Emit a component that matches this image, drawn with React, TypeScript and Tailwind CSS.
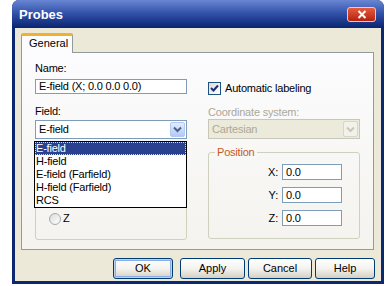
import React from "react";

const font = { fontFamily: '"Liberation Sans", Arial, sans-serif' };

const Arrow: React.FC<{ disabled?: boolean }> = ({ disabled }) => (
  <div
    className={
      disabled
        ? "w-[15px] h-full border border-[#d8d6cb] rounded-[2px] bg-[#f2f1ea] flex items-center justify-center"
        : "w-[15px] h-full border border-[#b2c8f5] rounded-[2px] bg-gradient-to-b from-[#e3ecfe] to-[#b4c9f6] flex items-center justify-center"
    }
  >
    <svg width="9" height="7" viewBox="0 0 9 7">
      <path
        d="M1 1.5 L4.5 5 L8 1.5"
        fill="none"
        stroke={disabled ? "#c9c7ba" : "#4d6185"}
        strokeWidth="2"
      />
    </svg>
  </div>
);

const Button: React.FC<{ label: string; w: string; def?: boolean }> = ({ label, w, def }) => (
  <div
    className={`${w} h-[21px] rounded-[3px] border border-[#003c74] flex items-center justify-center text-[11px] text-black bg-gradient-to-b from-white via-[#f4f3ee] to-[#d6d0c5] ${
      def ? "shadow-[inset_0_0_0_1px_#bcd4f6,inset_0_0_0_2px_#89ade4]" : ""
    }`}
  >
    {label}
  </div>
);

const PosRow: React.FC<{ axis: string; mt: string }> = ({ axis, mt }) => (
  <div className={`flex items-center ${mt}`}>
    <span className="w-[73px] text-right pr-[4px] text-[11px] leading-[13px]">{axis}:</span>
    <div className="w-[60px] h-[16px] bg-white border border-[#7f9db9] text-[11px] leading-[14px] pl-[3px]">
      0.0
    </div>
  </div>
);

export default function App() {
  return (
    <div className="w-[387px] h-[286px] bg-white text-black overflow-hidden" style={font}>
      <div className="ml-[12px] w-[372px] h-[284px] rounded-t-[7px] bg-[#0c2870] flex flex-col overflow-hidden">
        {/* title bar */}
        <div className="h-[28px] shrink-0 bg-gradient-to-b from-[#6a86d4] via-[#2f4fa6] to-[#0a2470] flex items-center justify-between pl-[7px] pr-[8px]">
          <span className="text-white font-bold text-[13px] leading-none pt-[1px]">Probes</span>
          <div className="w-[29px] h-[15px] rounded-[3px] border border-[#f0c8c0] bg-gradient-to-b from-[#e85a3c] to-[#b3200c] flex items-center justify-center">
            <svg width="10" height="9" viewBox="0 0 10 9">
              <path d="M1.5 1 L8.5 8 M8.5 1 L1.5 8" stroke="white" strokeWidth="2" />
            </svg>
          </div>
        </div>

        {/* body */}
        <div className="mx-[3px] mb-[3px] flex-1 bg-[#ece9d8] flex flex-col">
          {/* tab */}
          <div className="ml-[6px] mt-[5px] h-[20px] flex">
            <div className="w-[52px] h-[20px] bg-[#fcfcfe] border-x border-[#919b9c] border-t-[3px] border-t-[#f0b030] rounded-t-[2px] text-[11px] leading-[15px] pl-[7px] relative z-10">
              General
            </div>
          </div>
          {/* panel */}
          <div className="ml-[6px] -mt-[1px] w-[353px] h-[198px] border border-[#919b9c] bg-gradient-to-b from-[#fcfcfe] to-[#f4f3ee] flex pl-[13px] text-[11px] tracking-[-0.2px]">
            {/* left column */}
            <div className="w-[152px] flex flex-col pt-[9px]">
              <span className="leading-[13px]">Name:</span>
              <div className="mt-[4px] h-[15px] bg-white border border-[#7f9db9] leading-[13px] pl-[3px]">
                E-field (X; 0.0 0.0 0.0)
              </div>
              <span className="mt-[11px] leading-[13px]">Field:</span>
              <div className="relative mt-[2px]">
                <div className="h-[19px] bg-white border border-[#7f9db9] flex items-center justify-between pl-[3px] pr-[1px] py-[1px]">
                  <span>E-field</span>
                  <Arrow />
                </div>
                <div className="absolute left-[-1px] top-[21px] w-[153px] z-20 bg-white border border-black flex flex-col leading-[13px]">
                  <span className="bg-[#29418f] text-white outline-1 outline-dotted outline-[#e0e0a0] -outline-offset-1 pl-[1px]">
                    E-field
                  </span>
                  <span className="pl-[1px]">H-field</span>
                  <span className="pl-[1px]">E-field (Farfield)</span>
                  <span className="pl-[1px]">H-field (Farfield)</span>
                  <span className="pl-[1px]">RCS</span>
                </div>
              </div>
              <div className="mt-[10px] h-[91px] border border-[#d0d0bf] rounded-[3px] flex flex-col justify-end pb-[14px] pl-[13px]">
                <div className="flex items-center gap-[2px]">
                  <div className="w-[12px] h-[12px] rounded-full border border-[#a3a9b0] bg-gradient-to-br from-[#dcdcd6] to-white" />
                  <span className="leading-[13px]">Z</span>
                </div>
              </div>
            </div>

            {/* right column */}
            <div className="w-[152px] ml-[21px] flex flex-col pt-[29px]">
              <div className="flex items-center gap-[4px] h-[13px]">
                <div className="w-[13px] h-[13px] border border-[#1c5180] bg-gradient-to-br from-[#dcdcd6] to-white flex items-center justify-center">
                  <svg width="9" height="9" viewBox="0 0 9 9">
                    <path d="M1 4 L3.5 6.5 L8 1.5" fill="none" stroke="#1a2f78" strokeWidth="2" />
                  </svg>
                </div>
                <span className="leading-[13px]">Automatic labeling</span>
              </div>
              <span className="mt-[11px] leading-[13px] text-[#aca899]">Coordinate system:</span>
              <div className="h-[20px] bg-[#ebeadb] border border-[#c9c7ba] flex items-center justify-between pl-[3px] pr-[1px] py-[1px] text-[#aca899]">
                <span>Cartesian</span>
                <Arrow disabled />
              </div>
              <div className="relative mt-[13px] h-[87px] border border-[#d0d0bf] rounded-[3px] flex flex-col pt-[11px]">
                <span className="absolute -top-[7px] left-[6px] px-[2px] bg-[#f8f8f5] text-[#c55a1e] leading-[13px]">
                  Position
                </span>
                <PosRow axis="X" mt="mt-0" />
                <PosRow axis="Y" mt="mt-[7px]" />
                <PosRow axis="Z" mt="mt-[7px]" />
              </div>
            </div>
          </div>

          {/* buttons */}
          <div className="mt-[8px] flex">
            <div className="ml-[98px]">
              <Button label="OK" w="w-[60px]" def />
            </div>
            <div className="ml-[7px]">
              <Button label="Apply" w="w-[65px]" />
            </div>
            <div className="ml-[3px]">
              <Button label="Cancel" w="w-[64px]" />
            </div>
            <div className="ml-[3px]">
              <Button label="Help" w="w-[60px]" />
            </div>
          </div>
        </div>
      </div>
    </div>
  );
}
